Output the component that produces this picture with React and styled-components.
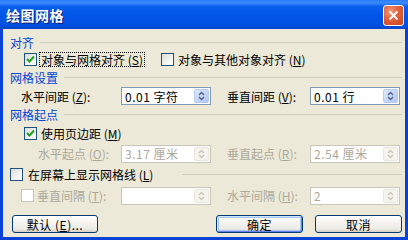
import React from "react"
import styled, { createGlobalStyle } from "styled-components"

const Global = createGlobalStyle`
  html, body {
    margin: 0;
    padding: 0;
    overflow: hidden;
  }
  body {
    font-family: "Noto Sans CJK SC", "DejaVu Sans", sans-serif;
    font-size: 12px;
  }
`

const Window = styled.div`
  width: 408px;
  height: 240px;
  display: flex;
  flex-direction: column;
  background: #0842d6;
`
const TitleBar = styled.div`
  height: 29px;
  flex: none;
  display: flex;
  align-items: center;
  padding: 0 4px 0 6px;
  box-sizing: border-box;
  background: linear-gradient(
    to bottom,
    #2a7bf5 0%,
    #3d8cfb 10%,
    #0a5fee 22%,
    #0055e8 55%,
    #0051e0 85%,
    #0745c8 100%
  );
`
const Title = styled.div`
  flex: 1;
  color: #fff;
  font-size: 14px;
  font-weight: bold;
  letter-spacing: 0.5px;
  text-shadow: 1px 1px 0 #0a1c7a;
`
const CloseButton = styled.div`
  width: 19px;
  height: 19px;
  border: 1px solid #fff;
  border-radius: 3px;
  display: flex;
  align-items: center;
  justify-content: center;
  background: radial-gradient(circle at 35% 30%, #f29a7c 0%, #e2603a 45%, #c8431f 100%);
  margin-top: 2px;
`
const Body = styled.div`
  flex: 1;
  margin: 0 3px 3px 3px;
  background: #ece9d8;
  padding: 5px 3px 0 7px;
  display: flex;
  flex-direction: column;
`
const Header = styled.div`
  height: ${p => p.h}px;
  display: flex;
  align-items: center;
  color: #0046d5;
  flex: none;
`
const Line = styled.div`
  flex: 1;
  height: 1px;
  background: #d0d0bf;
  margin-left: ${p => p.gap || 6}px;
`
const Row = styled.div`
  height: ${p => p.h}px;
  display: flex;
  align-items: center;
  padding-left: ${p => p.indent || 0}px;
  flex: none;
`
const FieldRow = styled.div`
  height: ${p => p.h}px;
  display: grid;
  align-items: center;
  padding-left: ${p => p.indent}px;
  grid-template-columns: ${p => 111 - p.indent}px 90px 15px 84px 90px;
  flex: none;
`
const CheckGroup = styled.div`
  display: flex;
  align-items: center;
  gap: ${p => p.gap || 3}px;
  width: ${p => (p.w ? `${p.w}px` : "auto")};
  color: ${p => (p.disabled ? "#aca899" : "#000")};
`
const Label = styled.span`
  color: ${p => (p.disabled ? "#aca899" : "#000")};
  white-space: nowrap;
  line-height: 13px;
  padding: 0 1px;
  outline: ${p => (p.focus ? "1px dotted #000" : "none")};
`
const Box = styled.div`
  width: 11px;
  height: 11px;
  border: 1px solid ${p => (p.disabled ? "#cac8bb" : "#1c5180")};
  background: ${p =>
    p.disabled ? "#fff" : "linear-gradient(135deg, #dcdcd7 0%, #f4f4f0 60%, #fff 100%)"};
  display: flex;
  align-items: center;
  justify-content: center;
  flex: none;
`
const Input = styled.div`
  height: 18px;
  box-sizing: border-box;
  border: 1px solid ${p => (p.disabled ? "#c9c7ba" : "#7f9db9")};
  background: #fff;
  display: flex;
  align-items: center;
  padding-left: 3px;
  color: ${p => (p.disabled ? "#aca899" : "#000")};
  letter-spacing: 0.5px;
`
const Value = styled.span`
  flex: 1;
  white-space: pre;
`
const Spin = styled.div`
  width: 15px;
  height: 14px;
  margin-right: 1px;
  border-radius: 2px;
  border: 1px solid ${p => (p.disabled ? "#e8e6dc" : "#b5c9f5")};
  box-sizing: border-box;
  background: ${p =>
    p.disabled
      ? "#f5f4ee"
      : "linear-gradient(135deg, #dfe8fd 0%, #c4d5fa 55%, #b2c6f3 100%)"};
  display: flex;
  align-items: center;
  justify-content: center;
`
const ButtonRow = styled.div`
  display: flex;
  align-items: center;
  margin-top: 9px;
  padding-left: 2px;
  height: 18px;
`
const Button = styled.div`
  width: ${p => p.w}px;
  height: 18px;
  box-sizing: border-box;
  border: 1px solid #003c74;
  border-radius: 3px;
  background: linear-gradient(to bottom, #fff 0%, #f4f3ee 40%, #ecebe6 80%, #d6d0c5 100%);
  box-shadow: ${p =>
    p.primary ? "inset 1px 1px 0 #cee7ff, inset -1px -1px 0 #6982ee, inset 0 0 0 2px #a8c6f3" : "none"};
  display: flex;
  align-items: center;
  justify-content: center;
  margin-left: ${p => p.ml || 0}px;
  letter-spacing: 0.5px;
`
const Spacer = styled.div`
  flex: 1;
`

const Check = ({ checked, disabled }) => (
  <Box disabled={disabled}>
    {checked && (
      <svg width="9" height="9" viewBox="0 0 9 9">
        <path d="M1 4 L3.5 6.5 L8 1.5" stroke="#21a121" strokeWidth="2" fill="none" />
      </svg>
    )}
  </Box>
)

const SpinBox = ({ disabled }) => {
  const c = disabled ? "#c9c6b8" : "#4d6185"
  return (
    <Spin disabled={disabled}>
      <svg width="7" height="10" viewBox="0 0 7 10">
        <path d="M1 4 L3.5 1.5 L6 4" stroke={c} strokeWidth="1.4" fill="none" />
        <path d="M1 6 L3.5 8.5 L6 6" stroke={c} strokeWidth="1.4" fill="none" />
      </svg>
    </Spin>
  )
}

const Field = ({ value = "", disabled }) => (
  <Input disabled={disabled}>
    <Value>{value}</Value>
    <SpinBox disabled={disabled} />
  </Input>
)

const App = () => (
  <Window>
    <Global />
    <TitleBar>
      <Title>绘图网格</Title>
      <CloseButton>
        <svg width="11" height="11" viewBox="0 0 11 11">
          <path d="M1.5 1.5 L9.5 9.5 M9.5 1.5 L1.5 9.5" stroke="#fff" strokeWidth="1.8" />
        </svg>
      </CloseButton>
    </TitleBar>
    <Body>
      <Header h={16}>
        对齐
        <Line />
      </Header>
      <Row h={18} indent={14}>
        <CheckGroup w={137}>
          <Check checked />
          <Label focus>
            对象与网格对齐 (<u>S</u>)
          </Label>
        </CheckGroup>
        <CheckGroup>
          <Check />
          <Label>
            对象与其他对象对齐 (<u>N</u>)
          </Label>
        </CheckGroup>
      </Row>
      <Header h={19}>
        网格设置
        <Line />
      </Header>
      <FieldRow h={18} indent={10}>
        <Label>
          水平间距 (<u>Z</u>):
        </Label>
        <Field value="0.01 字符" />
        <span />
        <Label>
          垂直间距 (<u>V</u>):
        </Label>
        <Field value="0.01 行" />
      </FieldRow>
      <Header h={18}>
        网格起点
        <Line />
      </Header>
      <Row h={21} indent={14}>
        <CheckGroup>
          <Check checked />
          <Label>
            使用页边距 (<u>M</u>)
          </Label>
        </CheckGroup>
      </Row>
      <FieldRow h={19} indent={27}>
        <Label disabled>
          水平起点 (<u>O</u>):
        </Label>
        <Field value="3.17 厘米" disabled />
        <span />
        <Label disabled>
          垂直起点 (<u>R</u>):
        </Label>
        <Field value="2.54 厘米" disabled />
      </FieldRow>
      <Row h={22}>
        <CheckGroup gap={4}>
          <Check />
          <Label>
            在屏幕上显示网格线 (<u>L</u>)
          </Label>
        </CheckGroup>
        <Line gap={28} />
      </Row>
      <FieldRow h={21} indent={11}>
        <CheckGroup disabled gap={2}>
          <Check disabled />
          <Label disabled>
            垂直间隔 (<u>T</u>):
          </Label>
        </CheckGroup>
        <Field disabled />
        <span />
        <Label disabled>
          水平间隔 (<u>H</u>):
        </Label>
        <Field value="2" disabled />
      </FieldRow>
      <ButtonRow>
        <Button w={86}>
          默认 (<u>E</u>)...
        </Button>
        <Spacer />
        <Button w={87} primary>
          确定
        </Button>
        <Button w={87} ml={12}>
          取消
        </Button>
      </ButtonRow>
    </Body>
  </Window>
)

export default App
